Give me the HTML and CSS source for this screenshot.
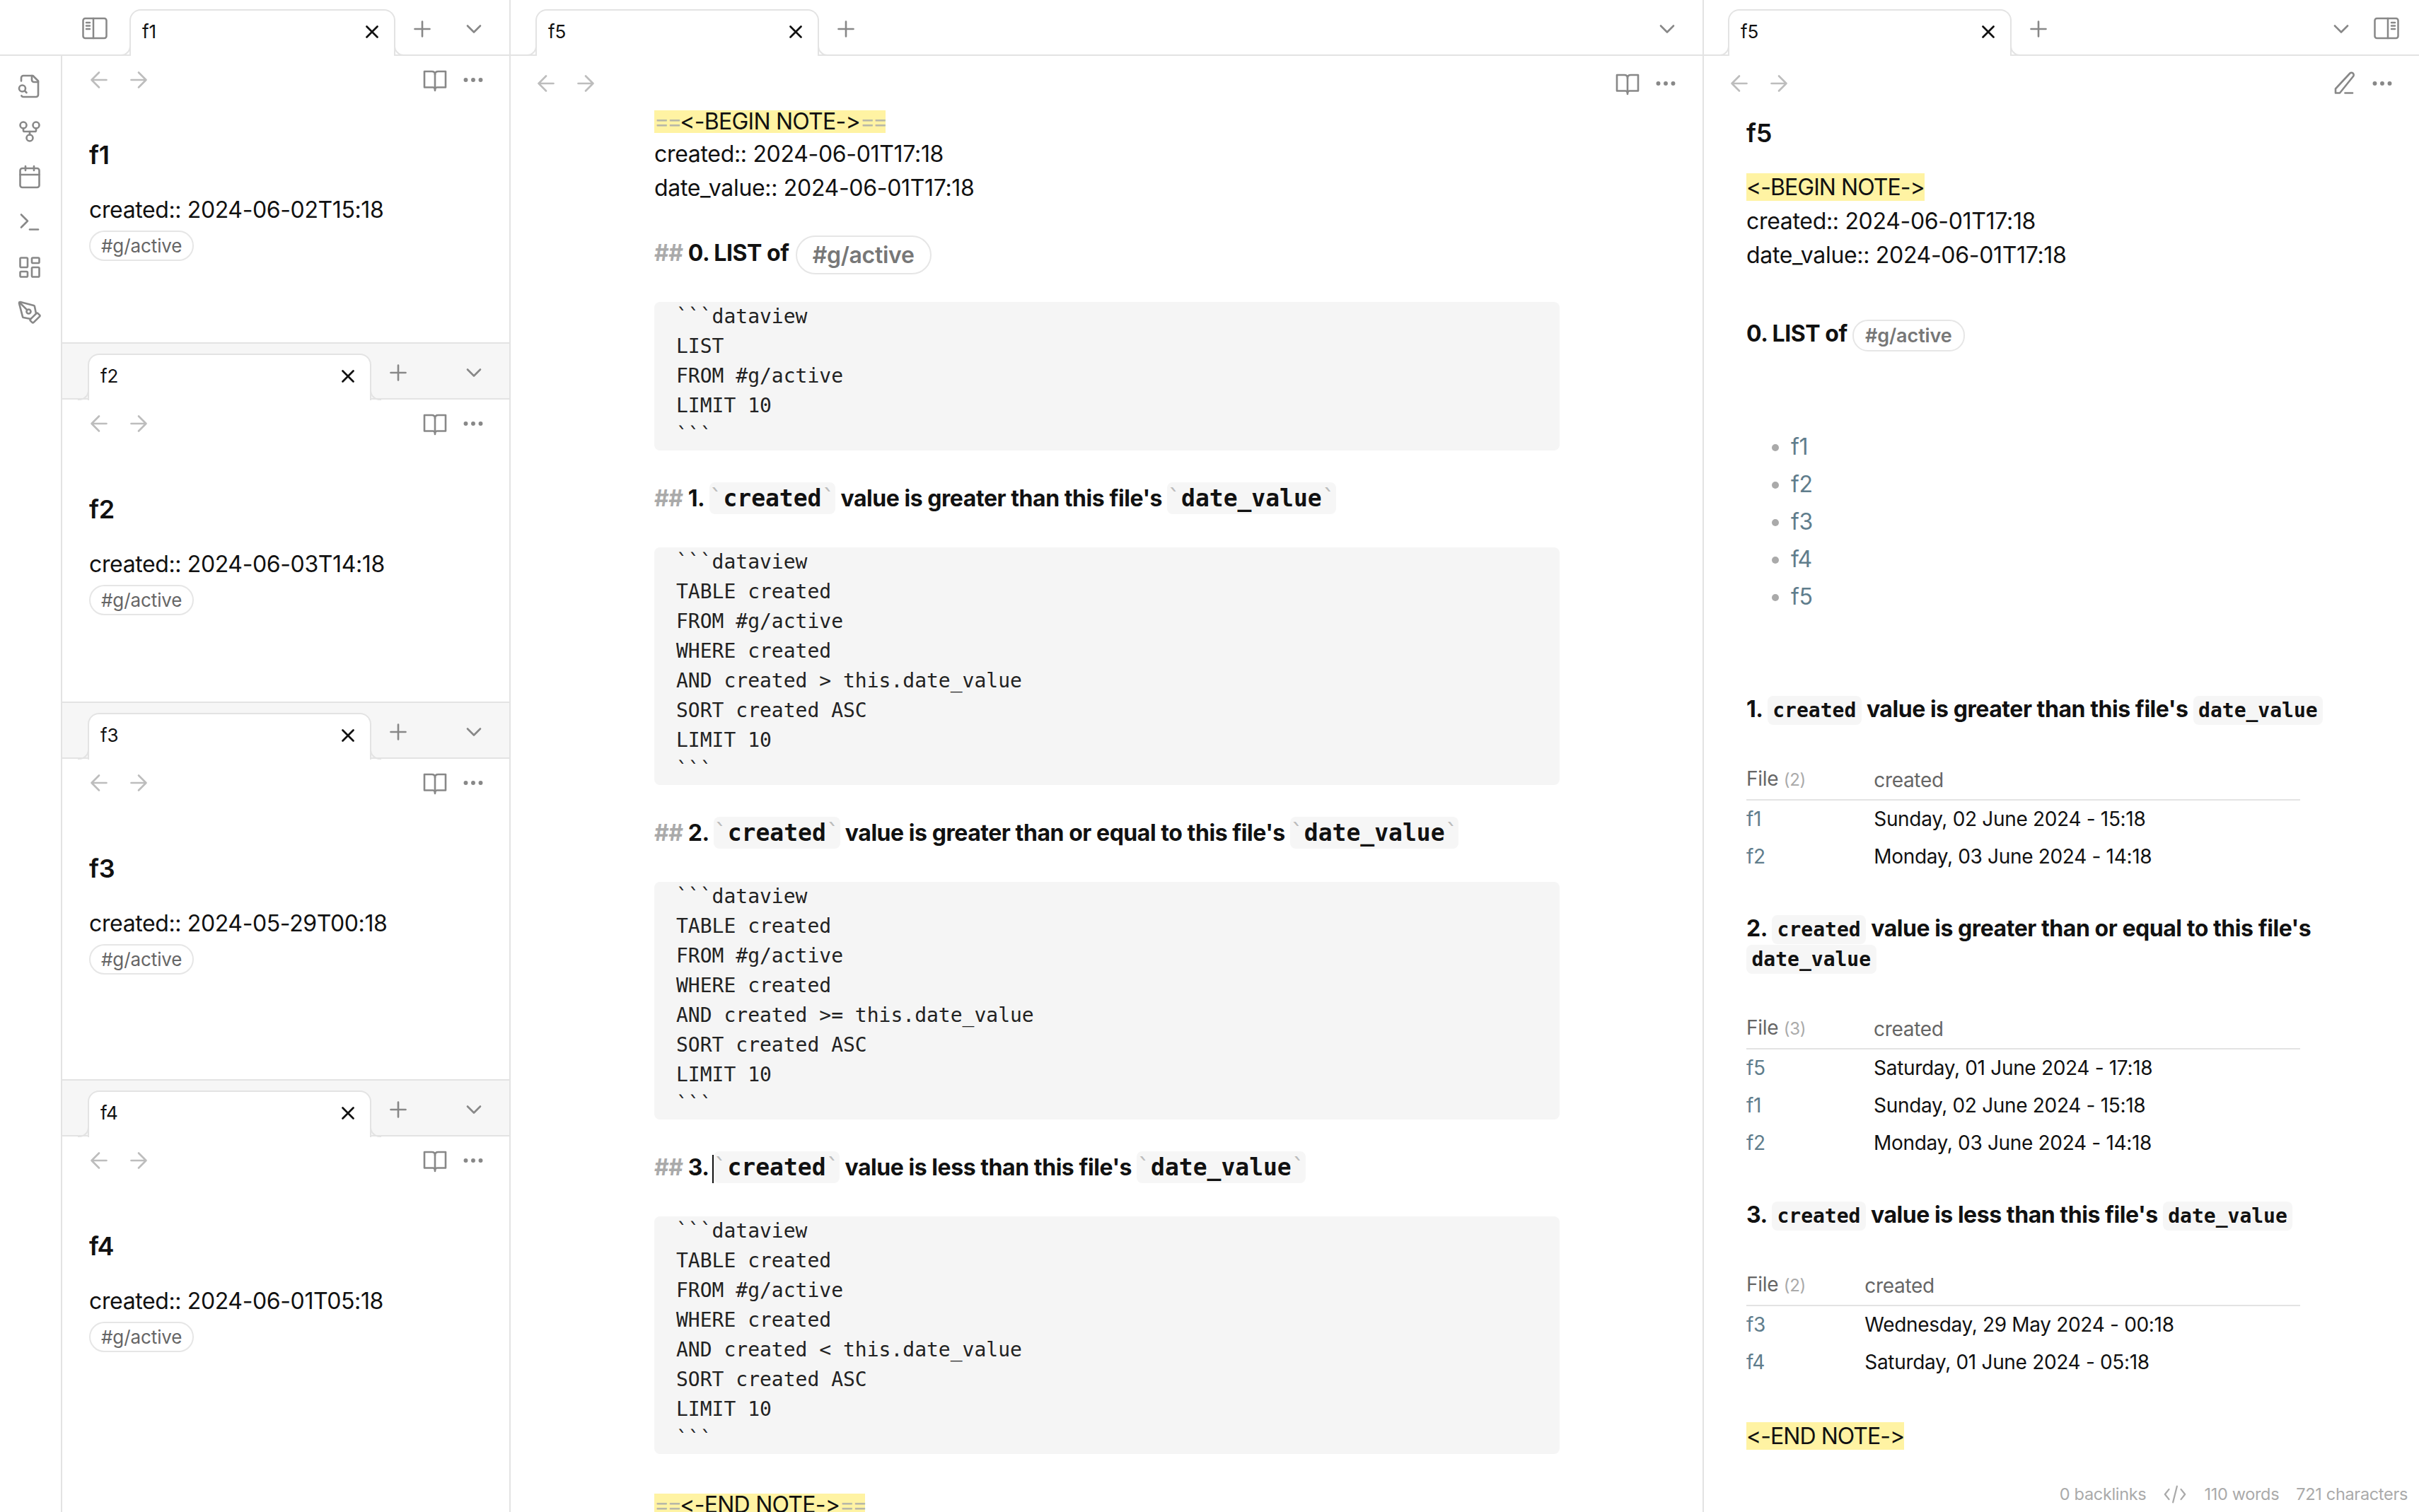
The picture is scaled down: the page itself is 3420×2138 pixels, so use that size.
FILE: index.html
```html
<!DOCTYPE html>
<html lang="en">
<head>
<meta charset="utf-8">
<title>Notes</title>
<link rel="stylesheet" href="styles.css">
</head>
<body>
<svg class="defs" width="0" height="0" aria-hidden="true">
  <symbol id="i-file" viewBox="0 0 24 24"><path d="M14 2v4a2 2 0 0 0 2 2h4"/><path d="M4.268 21a2 2 0 0 0 1.727 1H18a2 2 0 0 0 2-2V7l-5-5H6a2 2 0 0 0-2 2v3"/><path d="m9 18-1.5-1.5"/><circle cx="5" cy="14" r="3"/></symbol>
  <symbol id="i-fork" viewBox="0 0 24 24"><circle cx="12" cy="18" r="3"/><circle cx="6" cy="6" r="3"/><circle cx="18" cy="6" r="3"/><path d="M18 9v2c0 .6-.4 1-1 1H7c-.6 0-1-.4-1-1V9"/><path d="M12 12v3"/></symbol>
  <symbol id="i-cal" viewBox="0 0 24 24"><rect x="3" y="4" width="18" height="18" rx="2"/><path d="M16 2v4M8 2v4M3 10h18"/></symbol>
  <symbol id="i-term" viewBox="0 0 24 24"><path d="m4 17 6-6-6-6"/><path d="M12 19h8"/></symbol>
  <symbol id="i-dash" viewBox="0 0 24 24"><rect x="3" y="3" width="7" height="9" rx="1"/><rect x="14" y="3" width="7" height="5" rx="1"/><rect x="14" y="12" width="7" height="9" rx="1"/><rect x="3" y="16" width="7" height="5" rx="1"/></symbol>
  <symbol id="i-pen" viewBox="0 0 24 24"><path d="M15.707 21.293a1 1 0 0 1-1.414 0l-1.586-1.586a1 1 0 0 1 0-1.414l5.586-5.586a1 1 0 0 1 1.414 0l1.586 1.586a1 1 0 0 1 0 1.414z"/><path d="m18 13-1.375-6.874a1 1 0 0 0-.746-.776L3.235 2.028a1 1 0 0 0-1.207 1.207L5.35 15.879a1 1 0 0 0 .776.746L13 18"/><path d="m2.3 2.3 7.286 7.286"/><circle cx="11" cy="11" r="2"/></symbol>
  <symbol id="i-left-panel" viewBox="0 0 36 36"><rect x="1.5" y="4" width="33" height="28" rx="3"/><path d="M16 4v28M6 10h5M6 14.500h5M6 19h5"/></symbol>
  <symbol id="i-right-panel" viewBox="0 0 36 36"><rect x="1.500" y="4" width="33" height="28" rx="3"/><path d="M20 4v28M25 10h5M25 14.500h5M25 19h5"/></symbol>
  <symbol id="i-book" viewBox="0 0 24 24"><path d="M12 7v15"/><path d="M12 7c0-2 -1-3-3-3H2v15h8c1 0 2 1 2 2 0-1 1-2 2-2h8V4h-7c-2 0-3 1-3 3z"/></symbol>
  <symbol id="i-more" viewBox="0 0 24 24"><circle cx="12" cy="12" r="1.100" class="dot"/><circle cx="19" cy="12" r="1.100" class="dot"/><circle cx="5" cy="12" r="1.100" class="dot"/></symbol>
  <symbol id="i-plus" viewBox="0 0 24 24"><path d="M5 12h14M12 5v14"/></symbol>
  <symbol id="i-down" viewBox="0 0 24 24"><path d="m6 9 6 6 6-6"/></symbol>
  <symbol id="i-x" viewBox="0 0 24 24"><path d="M18 6 6 18M6 6l12 12"/></symbol>
  <symbol id="i-back" viewBox="0 0 24 24"><path d="m12 19-7-7 7-7M19 12H5"/></symbol>
  <symbol id="i-fwd" viewBox="0 0 24 24"><path d="M5 12h14M12 5l7 7-7 7"/></symbol>
  <symbol id="i-edit" viewBox="0 0 24 24"><path d="M13 21h7"/><path d="M17.500 2.500a2.121 2.121 0 0 1 3 3L8 21H4v-4Z"/></symbol>
  <symbol id="i-code" viewBox="0 0 24 24"><path d="m6 7-4 5 4 5M18 7l4 5-4 5M14 4l-4 16"/></symbol>
</svg>

<div class="app">
  <section class="col-left">
    <header class="tabbar tabbar-first">
      <svg class="ic ic-toggle"><use href="#i-left-panel"/></svg>
      <div class="tab tab-f1"><span class="tab-label">f1</span><svg class="ic-close"><use href="#i-x"/></svg></div>
      <svg class="ic ic-plus"><use href="#i-plus"/></svg>
      <svg class="ic ic-menu"><use href="#i-down"/></svg>
    </header>
    <div class="left-body">
      <nav class="ribbon">
        <svg class="ic"><use href="#i-file"/></svg>
        <svg class="ic"><use href="#i-fork"/></svg>
        <svg class="ic"><use href="#i-cal"/></svg>
        <svg class="ic"><use href="#i-term"/></svg>
        <svg class="ic"><use href="#i-dash"/></svg>
        <svg class="ic"><use href="#i-pen"/></svg>
      </nav>
      <div class="stack">
        <article class="pane pane-1">
          <div class="viewbar viewbar-small">
            <svg class="ic ic-nav"><use href="#i-back"/></svg><svg class="ic ic-nav"><use href="#i-fwd"/></svg>
            <span class="spacer"></span>
            <svg class="ic"><use href="#i-book"/></svg><svg class="ic"><use href="#i-more"/></svg>
          </div>
          <div class="note note-first">
            <h1 class="note-title">f1</h1>
            <p class="line note-field">created:: 2024-06-02T15:18</p>
            <p class="line"><span class="tag">#g/active</span></p>
          </div>
        </article>

        <article class="pane pane-2">
          <header class="tabbar tabbar-sub">
            <div class="tab"><span class="tab-label">f2</span><svg class="ic-close"><use href="#i-x"/></svg></div>
            <svg class="ic ic-plus"><use href="#i-plus"/></svg>
            <svg class="ic ic-menu"><use href="#i-down"/></svg>
          </header>
          <div class="viewbar viewbar-small">
            <svg class="ic ic-nav"><use href="#i-back"/></svg><svg class="ic ic-nav"><use href="#i-fwd"/></svg>
            <span class="spacer"></span>
            <svg class="ic"><use href="#i-book"/></svg><svg class="ic"><use href="#i-more"/></svg>
          </div>
          <div class="note">
            <h1 class="note-title">f2</h1>
            <p class="line note-field">created:: 2024-06-03T14:18</p>
            <p class="line"><span class="tag">#g/active</span></p>
          </div>
        </article>

        <article class="pane pane-3">
          <header class="tabbar tabbar-sub">
            <div class="tab"><span class="tab-label">f3</span><svg class="ic-close"><use href="#i-x"/></svg></div>
            <svg class="ic ic-plus"><use href="#i-plus"/></svg>
            <svg class="ic ic-menu"><use href="#i-down"/></svg>
          </header>
          <div class="viewbar viewbar-small">
            <svg class="ic ic-nav"><use href="#i-back"/></svg><svg class="ic ic-nav"><use href="#i-fwd"/></svg>
            <span class="spacer"></span>
            <svg class="ic"><use href="#i-book"/></svg><svg class="ic"><use href="#i-more"/></svg>
          </div>
          <div class="note">
            <h1 class="note-title">f3</h1>
            <p class="line note-field">created:: 2024-05-29T00:18</p>
            <p class="line"><span class="tag">#g/active</span></p>
          </div>
        </article>

        <article class="pane pane-4">
          <header class="tabbar tabbar-sub">
            <div class="tab"><span class="tab-label">f4</span><svg class="ic-close"><use href="#i-x"/></svg></div>
            <svg class="ic ic-plus"><use href="#i-plus"/></svg>
            <svg class="ic ic-menu"><use href="#i-down"/></svg>
          </header>
          <div class="viewbar viewbar-small">
            <svg class="ic ic-nav"><use href="#i-back"/></svg><svg class="ic ic-nav"><use href="#i-fwd"/></svg>
            <span class="spacer"></span>
            <svg class="ic"><use href="#i-book"/></svg><svg class="ic"><use href="#i-more"/></svg>
          </div>
          <div class="note">
            <h1 class="note-title">f4</h1>
            <p class="line note-field">created:: 2024-06-01T05:18</p>
            <p class="line"><span class="tag">#g/active</span></p>
          </div>
        </article>
      </div>
    </div>
  </section>

  <section class="col-mid">
    <header class="tabbar tabbar-mid">
      <div class="tab"><span class="tab-label">f5</span><svg class="ic-close"><use href="#i-x"/></svg></div>
      <svg class="ic ic-plus"><use href="#i-plus"/></svg>
      <svg class="ic ic-menu"><use href="#i-down"/></svg>
    </header>
    <div class="viewbar viewbar-large">
      <svg class="ic ic-nav"><use href="#i-back"/></svg><svg class="ic ic-nav"><use href="#i-fwd"/></svg>
      <span class="spacer"></span>
      <svg class="ic"><use href="#i-book"/></svg><svg class="ic"><use href="#i-more"/></svg>
    </div>
    <div class="editor">
      <p class="line line-first"><span class="mark-live"><span class="fm">==</span>&lt;-BEGIN NOTE-&gt;<span class="fm">==</span></span></p>
      <p class="line">created:: 2024-06-01T17:18</p>
      <p class="line">date_value:: 2024-06-01T17:18</p>

      <h2 class="live-h"><span class="fm-h">##</span> 0. LIST of <span class="tag tag-live">#g/active</span></h2>
      <pre class="code">```dataview
LIST
FROM #g/active
LIMIT 10
```</pre>

      <h2 class="live-h"><span class="fm-h">##</span> 1. <code class="live-code"><span class="tick">`</span>created<span class="tick">`</span></code> value is greater than this file's <code class="live-code"><span class="tick">`</span>date_value<span class="tick">`</span></code></h2>
      <pre class="code">```dataview
TABLE created
FROM #g/active
WHERE created
AND created &gt; this.date_value
SORT created ASC
LIMIT 10
```</pre>

      <h2 class="live-h"><span class="fm-h">##</span> 2. <code class="live-code"><span class="tick">`</span>created<span class="tick">`</span></code> value is greater than or equal to this file's <code class="live-code"><span class="tick">`</span>date_value<span class="tick">`</span></code></h2>
      <pre class="code">```dataview
TABLE created
FROM #g/active
WHERE created
AND created &gt;= this.date_value
SORT created ASC
LIMIT 10
```</pre>

      <h2 class="live-h"><span class="fm-h">##</span> 3.<span class="caret"></span><code class="live-code"><span class="tick">`</span>created<span class="tick">`</span></code> value is less than this file's <code class="live-code"><span class="tick">`</span>date_value<span class="tick">`</span></code></h2>
      <pre class="code">```dataview
TABLE created
FROM #g/active
WHERE created
AND created &lt; this.date_value
SORT created ASC
LIMIT 10
```</pre>

      <p class="line line-end"><span class="mark-live"><span class="fm">==</span>&lt;-END NOTE-&gt;<span class="fm">==</span></span></p>
    </div>
  </section>

  <section class="col-right">
    <header class="tabbar tabbar-right">
      <div class="tab"><span class="tab-label">f5</span><svg class="ic-close"><use href="#i-x"/></svg></div>
      <svg class="ic ic-plus"><use href="#i-plus"/></svg>
      <svg class="ic ic-menu"><use href="#i-down"/></svg>
      <svg class="ic ic-toggle-r"><use href="#i-right-panel"/></svg>
    </header>
    <div class="viewbar viewbar-large">
      <svg class="ic ic-nav"><use href="#i-back"/></svg><svg class="ic ic-nav"><use href="#i-fwd"/></svg>
      <span class="spacer"></span>
      <svg class="ic"><use href="#i-edit"/></svg><svg class="ic"><use href="#i-more"/></svg>
    </div>
    <div class="preview">
      <h1 class="note-title">f5</h1>
      <p class="line preview-begin"><mark class="mark">&lt;-BEGIN NOTE-&gt;</mark></p>
      <p class="line">created:: 2024-06-01T17:18</p>
      <p class="line">date_value:: 2024-06-01T17:18</p>

      <h2 class="pv-h pv-h0">0. LIST of <span class="tag tag-pv">#g/active</span></h2>
      <ul class="list">
        <li><a class="link">f1</a></li>
        <li><a class="link">f2</a></li>
        <li><a class="link">f3</a></li>
        <li><a class="link">f4</a></li>
        <li><a class="link">f5</a></li>
      </ul>

      <h2 class="pv-h pv-h1">1. <code class="pv-code">created</code> value is greater than this file's <code class="pv-code">date_value</code></h2>
      <table class="dv">
        <thead><tr><th>File <span class="count">(2)</span></th><th>created</th></tr></thead>
        <tbody>
          <tr><td><a class="link">f1</a></td><td>Sunday, 02 June 2024 - 15:18</td></tr>
          <tr><td><a class="link">f2</a></td><td>Monday, 03 June 2024 - 14:18</td></tr>
        </tbody>
      </table>

      <h2 class="pv-h">2. <code class="pv-code">created</code> value is greater than or equal to this file's <code class="pv-code">date_value</code></h2>
      <table class="dv">
        <thead><tr><th>File <span class="count">(3)</span></th><th>created</th></tr></thead>
        <tbody>
          <tr><td><a class="link">f5</a></td><td>Saturday, 01 June 2024 - 17:18</td></tr>
          <tr><td><a class="link">f1</a></td><td>Sunday, 02 June 2024 - 15:18</td></tr>
          <tr><td><a class="link">f2</a></td><td>Monday, 03 June 2024 - 14:18</td></tr>
        </tbody>
      </table>

      <h2 class="pv-h">3. <code class="pv-code">created</code> value is less than this file's <code class="pv-code">date_value</code></h2>
      <table class="dv">
        <thead><tr><th>File <span class="count">(2)</span></th><th>created</th></tr></thead>
        <tbody>
          <tr><td><a class="link">f3</a></td><td>Wednesday, 29 May 2024 - 00:18</td></tr>
          <tr><td><a class="link">f4</a></td><td>Saturday, 01 June 2024 - 05:18</td></tr>
        </tbody>
      </table>

      <p class="line preview-end"><mark class="mark">&lt;-END NOTE-&gt;</mark></p>
    </div>
    <footer class="status">
      <span>0 backlinks</span>
      <svg class="ic-status"><use href="#i-code"/></svg>
      <span>110 words</span>
      <span>721 characters</span>
    </footer>
  </section>
</div>
</body>
</html>
```
FILE: styles.css
```css
* { box-sizing: border-box; }
html, body { margin: 0; height: 100%; }
body {
  font-family: "Inter", "Liberation Sans", sans-serif;
  font-size: 32px;
  line-height: 48px;
  letter-spacing: -0.32px;
  color: #111;
  background: #fff;
  overflow: hidden;
}
.defs { position: absolute; }
symbol { overflow: visible; }
p, h1, h2, ul, pre { margin: 0; padding: 0; }

.app { display: flex; height: 2138px; overflow: hidden; }
.col-left { width: 722px; flex: none; border-right: 2px solid #e3e3e3; display: flex; flex-direction: column; }
.col-mid { width: 1687px; flex: none; border-right: 2px solid #e3e3e3; display: flex; flex-direction: column; position: relative; overflow: hidden; }
.col-right { flex: 1; min-width: 0; display: flex; flex-direction: column; position: relative; }

/* icons */
.ic { width: 36px; height: 36px; flex: none; fill: none; stroke: #888; stroke-width: 1.75; stroke-linecap: round; stroke-linejoin: round; }
.ic-nav { stroke: #bdbdbd; }
.dot { fill: #888; stroke: #888; }
.ic-close { width: 30px; height: 30px; flex: none; fill: none; stroke: #111; stroke-width: 2.2; stroke-linecap: round; stroke-linejoin: round; }
.ic-plus { margin-left: 20px; margin-top: 23px; stroke-width: 1.75; }
.ic-menu { margin-left: auto; margin-top: 23px; }

/* tab bars */
.tabbar { height: 79px; flex: none; display: flex; align-items: flex-start; border-bottom: 2px solid #e3e3e3; }
.tabbar-first { padding-left: 116px; padding-right: 32px; }
.tabbar-mid { padding-left: 35px; padding-right: 32px; }
.tabbar-right { padding-left: 34px; padding-right: 28px; }
.tabbar-sub { height: 81px; padding-left: 36px; padding-right: 32px; background: #f6f6f6; border-top: 2px solid #e3e3e3; }
.ic-toggle { margin-top: 22px; margin-right: 31px; stroke-width: 2.5; width: 36px; }
.ic-toggle-r { margin-top: 22px; margin-left: 28px; stroke-width: 2.5; }

.tab {
  position: relative;
  width: 401px;
  height: 66px;
  margin-top: 13px;
  padding: 0 16px 4px;
  display: flex;
  align-items: center;
  justify-content: space-between;
  background: #fff;
  border: 2px solid #e3e3e3;
  border-bottom: 0;
  border-radius: 16px 16px 0 0;
  font-size: 26px;
  line-height: 36px;
  letter-spacing: 0;
  color: #111;
}
.tab-f1 { width: 376px; }
.tabbar-sub .tab { width: 401px; margin-top: 14px; }
.tab::before, .tab::after {
  content: "";
  position: absolute;
  bottom: 0;
  width: 14px;
  height: 14px;
  border-bottom: 2px solid #e3e3e3;
}
.tab::before { left: -16px; border-right: 2px solid #e3e3e3; border-bottom-right-radius: 14px; }
.tab::after { right: -16px; border-left: 2px solid #e3e3e3; border-bottom-left-radius: 14px; }

/* left column */
.left-body { flex: 1; min-height: 0; display: flex; }
.ribbon { width: 88px; flex: none; border-right: 2px solid #e3e3e3; display: flex; flex-direction: column; align-items: center; gap: 28px; padding-top: 25px; padding-right: 3px; }
.stack { flex: 1; min-width: 0; display: flex; flex-direction: column; }
.pane { flex: none; overflow: hidden; }
.pane-1 { height: 405px; }
.pane-2 { height: 508px; }
.pane-3 { height: 534px; }
.pane-4 { flex: 1; }

/* view header */
.viewbar { display: flex; align-items: center; gap: 20px; flex: none; }
.viewbar .spacer + .ic { margin-right: -2px; }
.viewbar-small { height: 67px; padding: 0 33px 0 34px; }
.viewbar-large { height: 78px; padding: 0 34px 0 32px; }
.spacer { flex: 1; }

/* left notes */
.note { padding: 64px 0 0 38px; }
.note-first { padding-top: 49px; }
.note-title { font-size: 36px; line-height: 48px; font-weight: 600; letter-spacing: -0.01em; color: #111; }
.note-field { margin-top: 30px; letter-spacing: -0.38px; }
.tag {
  display: inline-block;
  font-size: 26px;
  line-height: 39px;
  letter-spacing: -0.1px;
  padding: 0 15px;
  border: 2px solid #e6e6e6;
  border-radius: 22px;
  color: #666;
  vertical-align: middle;
}

/* editor */
.editor { width: 1280px; margin-left: 203px; }
.line-first { margin-top: -11px; }
.mark-live { display: inline-block; line-height: 32px; letter-spacing: -0.75px; background: #fff3a3; vertical-align: middle; font-feature-settings: "calt" 0; }
.fm { color: #b8b8a8; letter-spacing: -3px; }
.live-h { font-size: 32px; line-height: 48px; font-weight: 650; letter-spacing: -0.014em; margin: 44px 0 45px; color: #111; white-space: nowrap; }
.fm-h { color: #aaa; }
.tag-live { font-size: 32px; font-weight: 600; line-height: 51px; letter-spacing: -0.3px; padding: 0 22px; border-radius: 28px; color: #777; margin: -6px 0 -6px 2px; }
.code {
  font-family: "DejaVu Sans Mono", monospace;
  font-size: 28px;
  line-height: 42px;
  letter-spacing: 0;
  background: #f5f5f5;
  border-radius: 8px;
  padding-left: 31px;
  color: #222;
}
.live-code {
  font-family: "DejaVu Sans Mono", monospace;
  font-size: 33px;
  line-height: 1;
  font-weight: 700;
  letter-spacing: 0;
  background: #f6f6f6;
  border-radius: 8px;
  padding: 3px 0;
}
.tick { color: #bbb; font-weight: 400; }
.caret { display: inline-block; width: 2px; height: 40px; margin-left: 4px; background: #111; vertical-align: middle; }
.line-end { margin-top: 46px; }

/* preview */
.preview { padding: 7px 0 0 60px; }
.preview-begin { margin-top: 29px; }
.mark { background: #fff3a3; color: #111; letter-spacing: -0.95px; font-feature-settings: "calt" 0; }
.pv-h { font-size: 32px; line-height: 42px; font-weight: 650; letter-spacing: -0.014em; margin-top: 55px; color: #111; }
.pv-h0 { margin-top: 66px; }
.pv-h1 { margin-top: 112px; }
.tag-pv { font-size: 27px; line-height: 41px; padding: 0 16px; font-weight: 600; color: #777; margin: -4px 0; }
.pv-code { font-family: "DejaVu Sans Mono", monospace; font-size: 28px; line-height: 1; font-weight: 700; letter-spacing: 0; background: #f6f6f6; border-radius: 8px; padding: 4px 7.500px; }
.list { margin-top: 112px; padding-left: 63px; font-size: 32px; }
.list li { height: 53px; line-height: 53px; }
.list li::marker { color: #aaa; }
.link { color: #5f7d8c; }

.dv { width: 783px; margin-top: 53px; border-collapse: collapse; font-size: 28px; line-height: 36px; }
.dv th { text-align: left; font-weight: 400; color: #666; padding: 0 48px 9px 0; border-bottom: 2px solid #e3e3e3; height: 54px; vertical-align: bottom; }
.dv td { padding: 0 48px 0 0; height: 53px; color: #111; }
.count { color: #aaa; font-size: 24px; }
.preview-end { margin-top: 55px; }

.status {
  position: absolute;
  right: 16px;
  bottom: 8px;
  display: flex;
  align-items: center;
  gap: 24px;
  font-size: 23.500px;
  line-height: 30px;
  color: #aaa;
}
.ic-status { width: 34px; height: 34px; fill: none; stroke: #aaa; stroke-width: 1.6; stroke-linecap: round; stroke-linejoin: round; }
```
